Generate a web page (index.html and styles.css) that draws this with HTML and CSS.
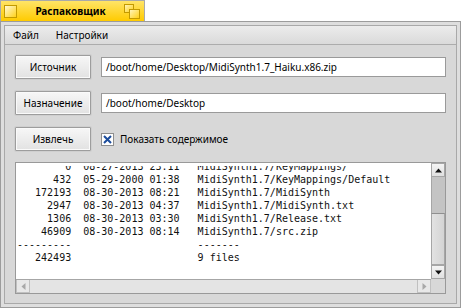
FILE: index.html
```html
<!DOCTYPE html>
<html>
<head>
    <meta charset="utf-8">
    <title>Распаковщик</title>
    <link rel="stylesheet" href="styles.css">
</head>
<body>
<div class="tab">
    <span class="close-box"></span>
    <span class="title">Распаковщик</span>
    <svg class="zoom-box" width="17" height="15" viewBox="0 0 17 15">
        <defs>
            <linearGradient id="zg" x1="0" y1="0" x2="1" y2="1">
                <stop offset="0" stop-color="#fff6c0"/>
                <stop offset="1" stop-color="#ffcf10"/>
            </linearGradient>
        </defs>
        <rect x="0.5" y="0.5" width="9" height="8" fill="url(#zg)" stroke="#c39a00"/>
        <rect x="5.5" y="5.5" width="10" height="9" fill="url(#zg)" stroke="#c39a00"/>
    </svg>
</div>
<div class="window">
    <div class="window-inner">
        <div class="menubar">
            <span class="menu-item">Файл</span>
            <span class="menu-item">Настройки</span>
        </div>
        <div class="content">
            <div class="form">
                <span class="btn">Источник</span>
                <span class="field">/boot/home/Desktop/MidiSynth1.7_Haiku.x86.zip</span>
                <span class="btn">Назначение</span>
                <span class="field">/boot/home/Desktop</span>
                <span class="btn">Извлечь</span>
                <label class="check">
                    <span class="check-box">
                        <svg width="11" height="11" viewBox="0 0 11 11">
                            <path d="M2 2 L9 9 M9 2 L2 9" stroke="#1b4c9c" stroke-width="2" fill="none"/>
                        </svg>
                    </span>
                    Показать содержимое
                </label>
            </div>
            <div class="list">
                <div class="text-area">
<pre>        0  08-27-2013 23:11   MidiSynth1.7/KeyMappings/
      432  05-29-2000 01:38   MidiSynth1.7/KeyMappings/Default
   172193  08-30-2013 08:21   MidiSynth1.7/MidiSynth
     2947  08-30-2013 04:37   MidiSynth1.7/MidiSynth.txt
     1306  08-30-2013 03:30   MidiSynth1.7/Release.txt
    46909  08-30-2013 08:14   MidiSynth1.7/src.zip
---------                     -------
   242493                     9 files</pre>
                </div>
                <div class="vscroll">
                    <span class="arrow">
                        <svg width="7" height="5" viewBox="0 0 7 5"><path d="M0 4.5 L3.5 0.5 L7 4.5 Z" fill="#111"/></svg>
                    </span>
                    <span class="track"></span>
                    <span class="thumb"></span>
                    <span class="arrow">
                        <svg width="7" height="5" viewBox="0 0 7 5"><path d="M0 0.5 L3.5 4.5 L7 0.5 Z" fill="#111"/></svg>
                    </span>
                </div>
                <div class="hscroll">
                    <span class="arrow off">
                        <svg width="5" height="7" viewBox="0 0 5 7"><path d="M4.5 0 L0.5 3.5 L4.5 7 Z" fill="#a8a8a8"/></svg>
                    </span>
                    <span class="htrack"></span>
                    <span class="arrow off">
                        <svg width="5" height="7" viewBox="0 0 5 7"><path d="M0.5 0 L4.5 3.5 L0.5 7 Z" fill="#a8a8a8"/></svg>
                    </span>
                </div>
                <div class="corner"></div>
            </div>
        </div>
    </div>
</div>
</body>
</html>
```
FILE: styles.css
```css
html, body {
    margin: 0;
    padding: 0;
}

body {
    background: #fff;
    color: #000;
    font: 10px/1.2 "Noto Sans", "DejaVu Sans", sans-serif;
}

/* window tab */
.tab {
    box-sizing: border-box;
    display: flex;
    align-items: center;
    width: 145px;
    height: 21px;
    padding: 0 3px;
    border: 1px solid #a9a9a9;
    border-bottom: none;
    background: linear-gradient(#ffe467, #ffcb00);
}

.close-box {
    box-sizing: border-box;
    width: 13px;
    height: 13px;
    border: 1px solid #c39a00;
    background: linear-gradient(135deg, #fff9d8, #ffd21a);
}

.title {
    flex: 1;
    text-align: center;
    font-weight: bold;
}

.zoom-box {
    display: block;
    margin-top: 1px;
}

/* window frame */
.window {
    box-sizing: border-box;
    width: 461px;
    height: 287px;
    padding: 3px;
    border: 1px solid #9c9c9c;
    background: #dedede;
}

.window-inner {
    box-sizing: border-box;
    display: flex;
    flex-direction: column;
    height: 100%;
    border: 1px solid #a9a9a9;
    background: #d8d8d8;
}

.menubar {
    display: flex;
    align-items: center;
    gap: 17px;
    height: 18px;
    padding: 0 8px;
    border-bottom: 1px solid #acacac;
    background: linear-gradient(#ececec, #dadada);
}

.content {
    flex: 1;
    display: flex;
    flex-direction: column;
    padding: 10px 10px 9px;
}

.form {
    display: grid;
    grid-template-columns: 76px 1fr;
    grid-auto-rows: 24px;
    column-gap: 10px;
    row-gap: 12px;
    align-items: center;
}

.btn {
    box-sizing: border-box;
    display: flex;
    align-items: center;
    justify-content: center;
    height: 24px;
    border: 1px solid #9d9d9d;
    border-radius: 1px;
    background: linear-gradient(#f7f7f7, #e2e2e2);
    box-shadow: inset 0 0 0 1px #fafafa, 0 0 0 1px #cfcfcf;
}

.field {
    box-sizing: border-box;
    height: 20px;
    padding: 0 4px;
    border: 1px solid #9a9a9a;
    background: #fff;
    line-height: 18px;
    white-space: nowrap;
}

.check {
    display: flex;
    align-items: center;
    gap: 6px;
}

.check-box {
    box-sizing: border-box;
    display: flex;
    align-items: center;
    justify-content: center;
    width: 13px;
    height: 13px;
    border: 1px solid #8e8e8e;
    background: #fff;
}

/* list with scrollbars */
.list {
    flex: 1;
    display: grid;
    grid-template-columns: 1fr 14px;
    grid-template-rows: 1fr 14px;
    margin-top: 11px;
    border: 1px solid #999;
    background: #fff;
    min-height: 0;
}

/* text is scrolled down a little: the top row is cut */
.text-area {
    overflow: hidden;
    min-height: 0;
    border-top: 3px solid #fff;
    padding-left: 1px;
}

.text-area pre {
    margin: -6px 0 0;
    font: 10px/13px "DejaVu Sans Mono", monospace;
    color: #111;
}

.vscroll {
    display: flex;
    flex-direction: column;
    background: #d8d8d8;
}

.arrow {
    box-sizing: border-box;
    display: flex;
    align-items: center;
    justify-content: center;
    flex: 0 0 14px;
    width: 14px;
    height: 14px;
    border: 1px solid #a6a6a6;
    background: linear-gradient(#f4f4f4, #e0e0e0);
}

.track {
    flex: 0 0 36px;
    border-left: 1px solid #a6a6a6;
    background: #c4c4c4;
}

.thumb {
    flex: 1;
    border: 1px solid #a6a6a6;
    border-top-color: #8f8f8f;
    background: linear-gradient(90deg, #e2e2e2, #d4d4d4);
}

.hscroll {
    display: flex;
    border-top: 1px solid #a6a6a6;
    background: #e4e4e4;
}

.hscroll .arrow {
    height: 13px;
    border-top: none;
    background: #e8e8e8;
    border-color: #c0c0c0;
}

.htrack {
    flex: 1;
}

.corner {
    background: #d8d8d8;
}
```
